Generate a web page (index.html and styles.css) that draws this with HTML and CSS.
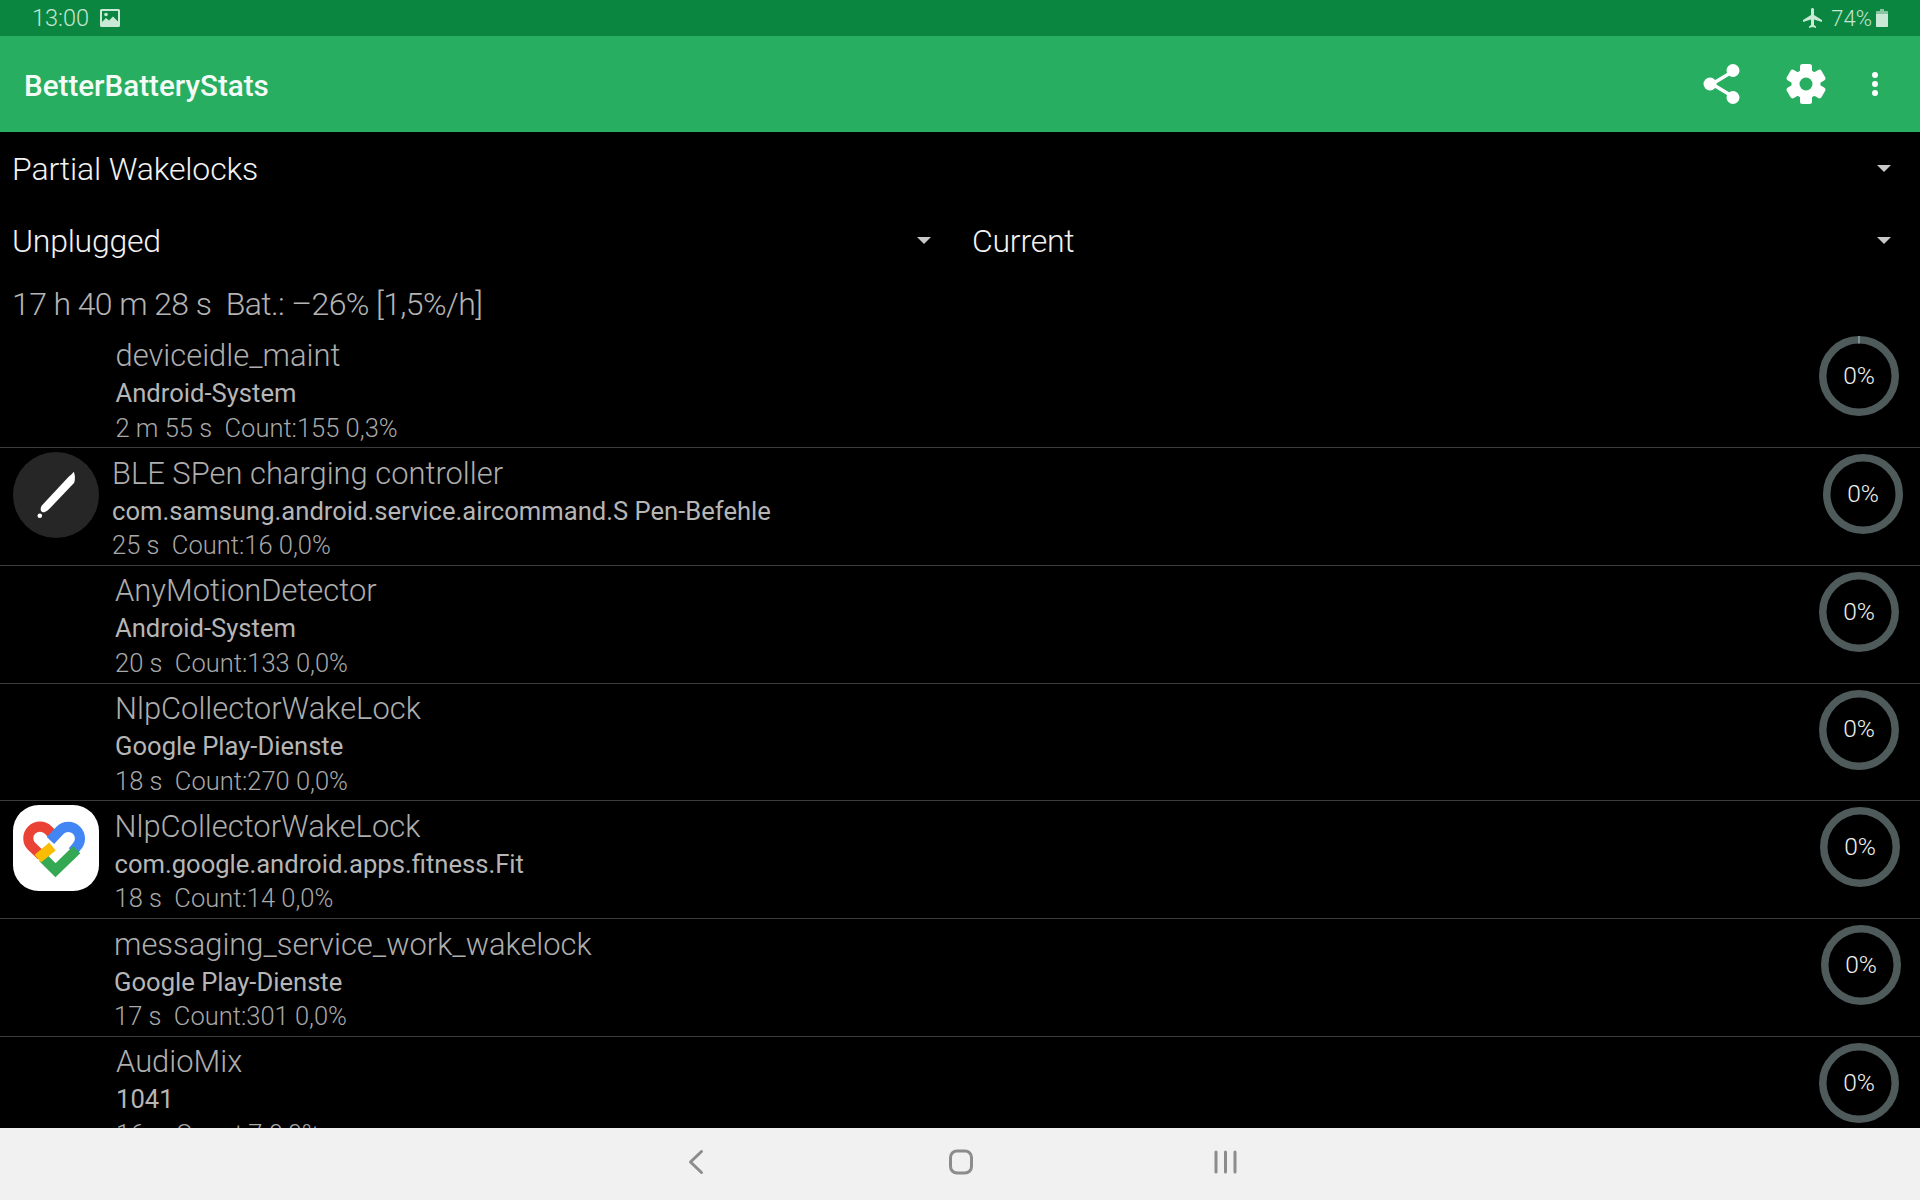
FILE: index.html
```html
<!DOCTYPE html>
<html lang="de">
<head>
<meta charset="utf-8">
<title>BetterBatteryStats</title>
<link rel="stylesheet" href="styles.css">
</head>
<body>
<div class="screen">
  <header class="statusbar">
    <div class="status-left">
      <span class="clock">13:00</span>
      <svg class="status-pic" viewBox="0 0 20 18"><path fill-rule="evenodd" d="M1.500 0h17A1.500 1.500 0 0 1 20 1.500v15a1.500 1.500 0 0 1-1.500 1.500h-17A1.500 1.500 0 0 1 0 16.500v-15A1.500 1.500 0 0 1 1.500 0zM2 2v14h16V2z"/><path d="M2 16v-3l4-4 3 2.500 4-4 5 5V16z"/><circle cx="6" cy="5.500" r="1.800"/></svg>
    </div>
    <div class="status-right">
      <svg class="status-plane" viewBox="0 0 24 24"><path d="M21 16v-2l-8-5V3.500c0-.83-.67-1.500-1.500-1.500S10 2.670 10 3.500V9l-8 5v2l8-2.500V19l-2 1.500V22l3.500-1 3.500 1v-1.500L13 19v-5.500l8 2.500z"/></svg>
      <span class="level">74%</span>
      <svg class="status-batt" viewBox="0 0 12 18"><path class="batt-empty" d="M4 0h4v2h3a1 1 0 0 1 1 1v14a1 1 0 0 1-1 1H1a1 1 0 0 1-1-1V3a1 1 0 0 1 1-1h3z"/><path d="M0 5h12v12a1 1 0 0 1-1 1H1a1 1 0 0 1-1-1z"/></svg>
    </div>
  </header>

  <div class="appbar">
    <div class="app-title">BetterBatteryStats</div>
    <div class="app-actions">
      <svg class="act-share" viewBox="0 0 38 40"><path d="M29 8 9 20l20 12" fill="none" stroke="#fff" stroke-width="3.500"/><circle cx="30" cy="6.500" r="6.500" fill="#fff"/><circle cx="7" cy="20" r="6.500" fill="#fff"/><circle cx="30" cy="33.500" r="6.500" fill="#fff"/></svg>
      <svg class="act-gear" viewBox="0 0 40 40"><g fill="#fff"><circle cx="20" cy="20" r="14.500"/><rect x="14" y="0" width="12" height="40" rx="2.500"/><rect x="14" y="0" width="12" height="40" rx="2.500" transform="rotate(60 20 20)"/><rect x="14" y="0" width="12" height="40" rx="2.500" transform="rotate(120 20 20)"/></g><circle cx="20" cy="20" r="6.500" fill="#27ae60"/></svg>
      <div class="act-dots"><i></i><i></i><i></i></div>
    </div>
  </div>

  <main class="content">
    <div class="spin-row spin-top"><span class="spin-text">Partial Wakelocks</span><span class="caret"></span></div>
    <div class="spin-pair">
      <div class="spin-row spin-half"><span class="spin-text">Unplugged</span><span class="caret"></span></div>
      <div class="spin-row spin-half"><span class="spin-text">Current</span><span class="caret"></span></div>
    </div>
    <div class="since">17 h 40 m 28 s&nbsp; Bat.: –26% [1,5%/h]</div>

    <div class="row r-first">
      <div class="icon"></div>
      <div class="texts"><div class="t1">deviceidle_maint</div><div class="t2">Android-System</div><div class="t3">2 m 55 s&nbsp; Count:155 0,3%</div></div>
      <div class="donut"><svg viewBox="0 0 80 80"><circle cx="40" cy="40" r="36.250"/><path d="M40 0v7.500"/></svg><span>0%</span></div>
    </div>
    <div class="row r-pen">
      <div class="icon icon-pen"><svg viewBox="0 0 85 85"><path fill="#fff" d="M55 24.500c2-1.500 4-3.500 5-5 1.500 3 1.500 7.500.500 11L37 55c-2 2-4 4-6 4.500-1.500.3-3-.5-3.500-2-.5-1.500 0-3 1-4.500z"/><circle cx="26.500" cy="63" r="2.300" fill="#fff"/></svg></div>
      <div class="texts"><div class="t1">BLE SPen charging controller</div><div class="t2">com.samsung.android.service.aircommand.S Pen-Befehle</div><div class="t3">25 s&nbsp; Count:16 0,0%</div></div>
      <div class="donut"><svg viewBox="0 0 80 80"><circle cx="40" cy="40" r="36.250"/></svg><span>0%</span></div>
    </div>
    <div class="row">
      <div class="icon"></div>
      <div class="texts"><div class="t1">AnyMotionDetector</div><div class="t2">Android-System</div><div class="t3">20 s&nbsp; Count:133 0,0%</div></div>
      <div class="donut"><svg viewBox="0 0 80 80"><circle cx="40" cy="40" r="36.250"/></svg><span>0%</span></div>
    </div>
    <div class="row">
      <div class="icon"></div>
      <div class="texts"><div class="t1">NlpCollectorWakeLock</div><div class="t2">Google Play-Dienste</div><div class="t3">18 s&nbsp; Count:270 0,0%</div></div>
      <div class="donut"><svg viewBox="0 0 80 80"><circle cx="40" cy="40" r="36.250"/></svg><span>0%</span></div>
    </div>
    <div class="row r-fit">
      <div class="icon icon-fit"><svg viewBox="0 0 85 85" fill="none" stroke-width="10"><path stroke="#ea4335" d="M28 50 18.500 41a11.500 11.500 0 0 1 16.300-16.300L41 31"/><path stroke="#4285f4" d="M37 35l9.500-10a11.500 11.500 0 0 1 16.300 16.300L59 46"/><path stroke="#34a853" d="M29.500 52 42 64.500 63 44"/><path stroke="#fbbc04" d="M24.500 53 39 41"/></svg></div>
      <div class="texts"><div class="t1">NlpCollectorWakeLock</div><div class="t2">com.google.android.apps.fitness.Fit</div><div class="t3">18 s&nbsp; Count:14 0,0%</div></div>
      <div class="donut"><svg viewBox="0 0 80 80"><circle cx="40" cy="40" r="36.250"/></svg><span>0%</span></div>
    </div>
    <div class="row r-msg">
      <div class="icon"></div>
      <div class="texts"><div class="t1">messaging_service_work_wakelock</div><div class="t2">Google Play-Dienste</div><div class="t3">17 s&nbsp; Count:301 0,0%</div></div>
      <div class="donut"><svg viewBox="0 0 80 80"><circle cx="40" cy="40" r="36.250"/></svg><span>0%</span></div>
    </div>
    <div class="row r-audio">
      <div class="icon"></div>
      <div class="texts"><div class="t1">AudioMix</div><div class="t2">1041</div><div class="t3">16 s&nbsp; Count:7 0,0%</div></div>
      <div class="donut"><svg viewBox="0 0 80 80"><circle cx="40" cy="40" r="36.250"/></svg><span>0%</span></div>
    </div>
  </main>

  <nav class="navbar">
    <svg class="nav-icon" viewBox="0 0 40 40"><path d="M25.500 9.500 14.500 20l11 10.500" fill="none"/></svg>
    <svg class="nav-icon" viewBox="0 0 40 40"><rect x="9.500" y="9" width="21" height="22" rx="6.500" fill="none"/></svg>
    <svg class="nav-icon" viewBox="0 0 40 40"><path d="M10 10v20M19.500 10v20M29 10v20" fill="none"/></svg>
  </nav>
</div>
</body>
</html>
```
FILE: styles.css
```css
* { box-sizing: border-box; }
html, body { margin: 0; height: 100%; background: #000; }
body { font-family: Roboto, "Liberation Sans", sans-serif; }
.screen { width: 1920px; height: 1200px; display: flex; flex-direction: column; overflow: hidden; }

.statusbar { height: 36px; flex: none; background: #0b8640; color: #c4e5d1; display: flex; justify-content: space-between; align-items: center; padding: 0 32px 0 32px; font-weight: 300; }
.clock { font-size: 23.500px; }
.level { font-size: 22px; }
.status-left, .status-right { display: flex; align-items: center; }
.status-left svg, .status-right svg { fill: #c9e8d5; }
.status-pic { width: 20px; height: 18px; margin-left: 11px; }
.status-plane { width: 24px; height: 24px; margin-right: 6px; }
.status-batt { width: 12px; height: 18px; margin-left: 4px; }
.status-right .batt-empty { fill: #86c6a0; }

.appbar { height: 96px; flex: none; background: #27ae60; display: flex; justify-content: space-between; align-items: center; padding: 0 42px 0 24px; }
.app-title { color: #f4fbf7; font-size: 29.600px; font-weight: 500; line-height: 1; margin-top: 5px; }
.app-actions { display: flex; align-items: center; margin-top: -1px; }
.act-share { width: 38px; height: 40px; }
.act-gear { width: 40px; height: 40px; margin-left: 45px; }
.act-dots { display: flex; flex-direction: column; gap: 3px; margin-left: 46px; }
.act-dots i { display: block; width: 6px; height: 6px; border-radius: 50%; background: #fff; }

.content { flex: 1; min-height: 0; overflow: hidden; background: #000; }
.spin-row { display: flex; justify-content: space-between; align-items: center; padding: 0 29px 0 12px; }
.spin-top { height: 72px; }
.spin-text { color: #f2f2f2; font-size: 32px; font-weight: 300; line-height: 40px; letter-spacing: -0.150px; margin-top: 2px; }
.spin-half .spin-text { letter-spacing: -0.250px; }
.caret { width: 0; height: 0; border-left: 7.500px solid transparent; border-right: 7.500px solid transparent; border-top: 7.500px solid #c8c8c8; }
.spin-pair { display: grid; grid-template-columns: 960px 960px; height: 72px; }
.spin-half { height: 72px; }
.since { color: #b4b4b4; font-size: 32px; font-weight: 300; line-height: 40px; letter-spacing: -0.600px; padding: 8px 0 0 12px; height: 54px; }

.row { height: 117.750px; border-top: 1px solid #3c3c3c; display: flex; align-items: flex-start; padding: 0 17px 0 12px; }
.r-first { border-top: 0; height: 117px; }
.icon { width: 86px; height: 86px; flex: none; margin: 4px 0 0 1px; }
.icon svg { display: block; width: 86px; height: 86px; }
.icon-pen { background: #262626; border-radius: 50%; }
.icon-fit { background: #fff; border-radius: 30%; }
.texts { flex: 1; min-width: 0; padding-left: 16px; }
.t1 { color: #aeaeae; font-size: 30.900px; font-weight: 300; line-height: 36px; margin-top: 7.500px; }
.t2 { color: #b6b6b6; font-size: 25.600px; font-weight: 400; line-height: 36px; margin-top: 1px; }
.t3 { color: #a8a8a8; font-size: 25.500px; font-weight: 300; line-height: 33px; margin-top: 0.500px; }
.r-first .texts { padding-top: 0.500px; padding-left: 16.500px; }
.r-pen .texts { padding-left: 13px; }
.r-fit .texts { padding-left: 15.500px; }
.r-msg .texts { padding-left: 15px; }
.r-audio .texts { padding-left: 17px; }
.donut { width: 80px; height: 80px; flex: none; display: grid; place-items: center; margin-top: 6px; margin-right: 4px; }
.donut > * { grid-area: 1 / 1; }
.donut svg { width: 80px; height: 80px; display: block; }
.donut circle { fill: none; stroke: #4e5b5a; stroke-width: 7.500; }
.donut path { stroke: #86a0a8; stroke-width: 1.500; fill: none; }
.donut span { color: #f0f0f0; font-size: 24.500px; font-weight: 300; line-height: 1; }
.r-pen .donut { margin-right: 0; }
.r-fit .donut { margin-right: 3px; }
.r-msg .donut { margin-right: 2px; }

.navbar { height: 72px; flex: none; background: #f1f1f1; display: flex; justify-content: center; align-items: center; gap: 225px; padding: 0 0 4px 2px; }
.nav-icon { width: 40px; height: 40px; }
.nav-icon * { stroke: #8c8c8c; stroke-width: 3; stroke-linecap: round; stroke-linejoin: round; }
```
